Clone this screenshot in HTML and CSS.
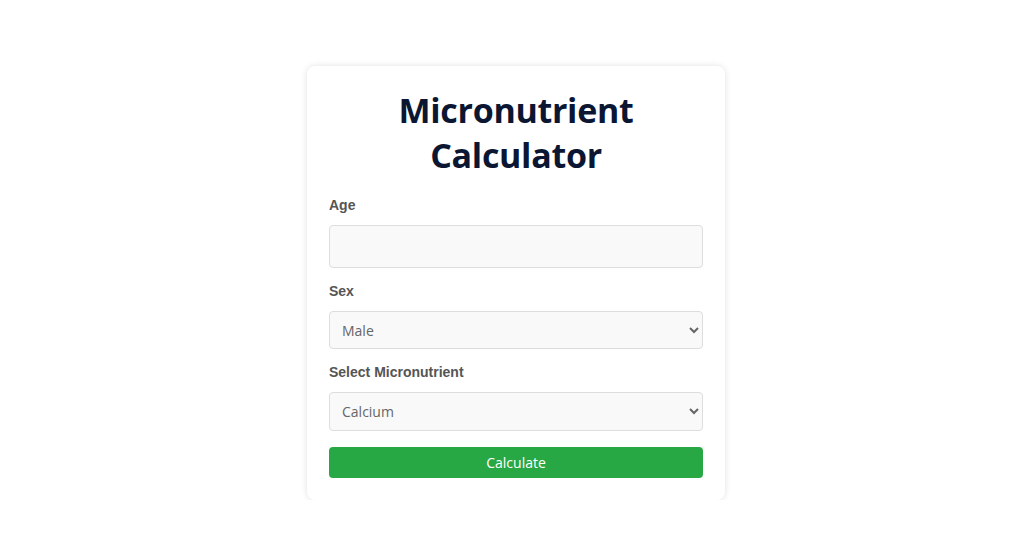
FILE: index.html
```html
<!DOCTYPE html>
<html lang="en">
<head>
  <meta charset="UTF-8" />
  <meta name="viewport" content="width=device-width, initial-scale=1.0" />
  <title>Micronutrient Calculator</title>
  <link rel="stylesheet" href="styles.css">
</head>
<body>
  <div class="container">
    <h1>Micronutrient Calculator</h1>

    <label for="age">Age</label>
    <input type="number" id="age" />

    <label for="sex">Sex</label>
    <select id="sex">
      <option value="male">Male</option>
      <option value="female">Female</option>
    </select>

    <label for="nutrient">Select Micronutrient</label>
    <select id="nutrient">
      <option value="calcium">Calcium</option>
      <option value="iron">Iron</option>
      <option value="zinc">Zinc</option>
    </select>

    <button type="button">Calculate</button>
  </div>
</body>
</html>
```

FILE: styles.css
```css
body {
  margin: 0;
  font-family: "Open Sans", "Noto Sans", sans-serif;
  background: #fff;
  color: #333;
  padding: 66px 0 0 8px;
}

.container {
  width: 374px;
  margin: 0 auto;
  padding: 22px 22px 22px;
  background: #fff;
  border-radius: 8px;
  box-shadow: 0 0 6px rgba(0, 0, 0, 0.12);
}

h1 {
  margin: 0 0 19px;
  text-align: center;
  font-size: 34px;
  line-height: 45px;
  font-weight: 700;
  color: #0b1633;
  letter-spacing: -0.3px;
}

label {
  display: block;
  font-family: "Liberation Sans", Arial, sans-serif;
  font-size: 14px;
  font-weight: 700;
  color: #555;
  line-height: 16px;
  margin-bottom: 12px;
}

input, select {
  display: block;
  width: 100%;
  box-sizing: border-box;
  border: 1px solid #ddd;
  border-radius: 4px;
  background: #f9f9f9;
  font-family: "Open Sans", sans-serif;
  font-size: 14px;
  color: #666;
  margin-bottom: 15px;
}

input {
  height: 43px;
  padding: 0 12px;
}

select {
  height: 38px;
  padding: 0 8px;
  margin-bottom: 15px;
}

#nutrient {
  height: 39px;
  margin-bottom: 16px;
}

button {
  display: block;
  width: 100%;
  height: 31px;
  border: none;
  border-radius: 4px;
  background: #28a745;
  color: #fff;
  font-family: "Open Sans", sans-serif;
  font-size: 14px;
  cursor: pointer;
}
```
